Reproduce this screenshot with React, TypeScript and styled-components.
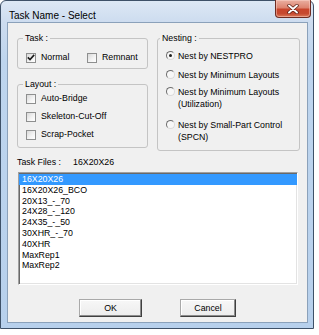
import React from "react";
import styled, { createGlobalStyle } from "styled-components";

const GlobalStyle = createGlobalStyle`
  html, body { margin: 0; padding: 0; background: #ffffff; }
  body { font-family: "Liberation Sans", Arial, sans-serif; }
  * { box-sizing: border-box; }
`;

const Window = styled.div`
  width: 314px;
  height: 329px;
  border: 1px solid #3e5168;
  border-radius: 6px 6px 0 0;
  background: linear-gradient(180deg, #dde8f5 0px, #cddcef 21px, #bed5ee 60px, #b7d0ec 100%);
  padding: 0 5px 5px 6px;
  display: flex;
  flex-direction: column;
`;

const TitleBar = styled.div`
  height: 21px;
  display: flex;
  justify-content: space-between;
  align-items: flex-start;
`;

const Title = styled.span`
  padding: 9px 0 0 2px;
  font-family: "Liberation Sans", Arial, sans-serif;
  font-size: 10px;
  line-height: 12px;
  color: #000;
`;

const CloseButton = styled.div`
  width: 36px;
  height: 18px;
  margin: -1px -3px 0 0;
  border: 1px solid #6e2c22;
  border-top: none;
  border-radius: 0 0 4px 4px;
  background: linear-gradient(180deg, #eab0a2 0%, #dd8470 45%, #c8452c 55%, #c64a30 80%, #db7a5a 100%);
  display: flex;
  align-items: center;
  justify-content: center;
  box-shadow: inset 0 0 0 1px rgba(255, 220, 210, 0.45);
`;

const Client = styled.div`
  flex: 1;
  border: 1px solid #8ba1ba;
  background: #f0f0f0;
  padding: 10px 9px 0 9px;
  display: flex;
  flex-direction: column;
  font-family: "Liberation Sans", Arial, sans-serif;
  font-size: 8.8px;
  color: #000;
`;

const TopGrid = styled.div`
  display: grid;
  grid-template-columns: 131px 143px;
  column-gap: 9px;
  align-items: start;
`;

const Column = styled.div<{ $gap: number }>`
  display: flex;
  flex-direction: column;
  gap: ${(p) => p.$gap}px;
`;

const Group = styled.fieldset<{ $pad: string }>`
  margin: 0;
  min-width: 0;
  padding: ${(p) => p.$pad};
  border: 1px solid #c4c4c4;
  border-radius: 3px;
  display: flex;
  flex-direction: column;
`;

const Legend = styled.legend<{ $x: number }>`
  margin-left: ${(p) => p.$x}px;
  padding: 0 2px;
  font-size: 8.8px;
  line-height: 11px;
`;

const Row = styled.div`
  display: flex;
`;

const CheckItem = styled.label<{ $w?: number }>`
  display: flex;
  align-items: center;
  gap: 5px;
  height: 11px;
  line-height: 11px;
  width: ${(p) => (p.$w ? `${p.$w}px` : "auto")};
  white-space: nowrap;
`;

const Box = styled.span`
  width: 10px;
  height: 10px;
  flex: none;
  border: 1px solid #8e8f8f;
  background: linear-gradient(135deg, #d9d9d9 0%, #f4f4f4 60%, #ffffff 100%);
  display: flex;
  align-items: center;
  justify-content: center;
`;

const RadioItem = styled.label<{ $mt: number }>`
  display: flex;
  align-items: flex-start;
  gap: 3px;
  margin-top: ${(p) => p.$mt}px;
  line-height: 12px;
  white-space: nowrap;
`;

const RadioDot = styled.span`
  width: 9px;
  height: 9px;
  flex: none;
  margin-top: 1px;
  border-radius: 50%;
  border: 1px solid;
  border-color: #6f6f6f #dadada #dadada #6f6f6f;
  background: #f7f7f7;
  display: flex;
  align-items: center;
  justify-content: center;
`;

const Dot = styled.span`
  width: 3px;
  height: 3px;
  border-radius: 50%;
  background: #1e1e1e;
`;

const FilesRow = styled.div`
  display: flex;
  margin-top: 6px;
  line-height: 11px;
`;

const FilesLabel = styled.span`
  width: 56px;
`;

const ListBox = styled.div`
  margin: 4px 0 0 1px;
  width: 280px;
  height: 113px;
  background: #ffffff;
  border: 1px solid;
  border-color: #a0a0a0 #ffffff #ffffff #a0a0a0;
  box-shadow: inset 1px 1px #696969, inset -1px -1px #e3e3e3;
  padding: 1px 0 0 0;
  overflow: hidden;
`;

const ListItem = styled.div<{ $selected?: boolean }>`
  height: 10.8px;
  line-height: 10.8px;
  padding-left: 3px;
  background: ${(p) => (p.$selected ? "#3399ff" : "transparent")};
  color: ${(p) => (p.$selected ? "#ffffff" : "#000000")};
  white-space: nowrap;
`;

const ButtonRow = styled.div`
  display: flex;
  justify-content: center;
  gap: 38px;
  margin-top: 14px;
`;

const Button = styled.button<{ $w: number }>`
  width: ${(p) => p.$w}px;
  height: 18px;
  padding: 0;
  font-family: "Liberation Sans", Arial, sans-serif;
  font-size: 8.8px;
  color: #000;
  background: linear-gradient(180deg, #f7f7f7 0%, #ececec 100%);
  border: 1px solid;
  border-color: #a9a9a9 #3f3f3f #3f3f3f #a9a9a9;
  box-shadow: inset -1px -1px #8c8c8c, inset 1px 1px #ffffff;
`;

const Check = () => (
  <svg width="8" height="7" viewBox="0 0 8 7">
    <path d="M0.8 3.4 L3 5.6 L7.2 0.9" fill="none" stroke="#1a1a1a" strokeWidth="1.6" />
  </svg>
);

const CloseX = () => (
  <svg width="12" height="10" viewBox="0 0 12 10">
    <path d="M2 1.5 L10 8.5 M10 1.5 L2 8.5" stroke="#5a1d14" strokeWidth="3.4" strokeLinecap="round" />
    <path d="M2 1.5 L10 8.5 M10 1.5 L2 8.5" stroke="#ffffff" strokeWidth="1.9" strokeLinecap="round" />
  </svg>
);

const files = [
  "16X20X26",
  "16X20X26_BCO",
  "20X13_-_70",
  "24X28_-_120",
  "24X35_-_50",
  "30XHR_-_70",
  "40XHR",
  "MaxRep1",
  "MaxRep2",
];

export default function App() {
  return (
    <>
      <GlobalStyle />
      <Window>
        <TitleBar>
          <Title>Task Name - Select</Title>
          <CloseButton>
            <CloseX />
          </CloseButton>
        </TitleBar>
        <Client>
          <TopGrid>
            <Column $gap={10}>
              <Group $pad="8px 8px 5px 8px">
                <Legend $x={-3}>Task :</Legend>
                <Row>
                  <CheckItem $w={61}>
                    <Box>
                      <Check />
                    </Box>
                    Normal
                  </CheckItem>
                  <CheckItem>
                    <Box />
                    Remnant
                  </CheckItem>
                </Row>
              </Group>
              <Group $pad="3px 8px 7px 8px">
                <Legend $x={-3}>Layout :</Legend>
                <Column $gap={7}>
                  <CheckItem>
                    <Box />
                    Auto-Bridge
                  </CheckItem>
                  <CheckItem>
                    <Box />
                    Skeleton-Cut-Off
                  </CheckItem>
                  <CheckItem>
                    <Box />
                    Scrap-Pocket
                  </CheckItem>
                </Column>
              </Group>
            </Column>
            <Group $pad="0 8px 7px 8px">
              <Legend $x={-6}>Nesting :</Legend>
              <RadioItem $mt={6}>
                <RadioDot>
                  <Dot />
                </RadioDot>
                Nest by NESTPRO
              </RadioItem>
              <RadioItem $mt={7}>
                <RadioDot />
                Nest by Minimum Layouts
              </RadioItem>
              <RadioItem $mt={5}>
                <RadioDot />
                <span>
                  Nest by Minimum Layouts
                  <br />
                  (Utilization)
                </span>
              </RadioItem>
              <RadioItem $mt={9}>
                <RadioDot />
                <span>
                  Nest by Small-Part Control
                  <br />
                  (SPCN)
                </span>
              </RadioItem>
            </Group>
          </TopGrid>
          <FilesRow>
            <FilesLabel>Task Files :</FilesLabel>
            <span>16X20X26</span>
          </FilesRow>
          <ListBox>
            {files.map((f, i) => (
              <ListItem key={f} $selected={i === 0}>
                {f}
              </ListItem>
            ))}
          </ListBox>
          <ButtonRow>
            <Button $w={63}>OK</Button>
            <Button $w={56}>Cancel</Button>
          </ButtonRow>
        </Client>
      </Window>
    </>
  );
}
